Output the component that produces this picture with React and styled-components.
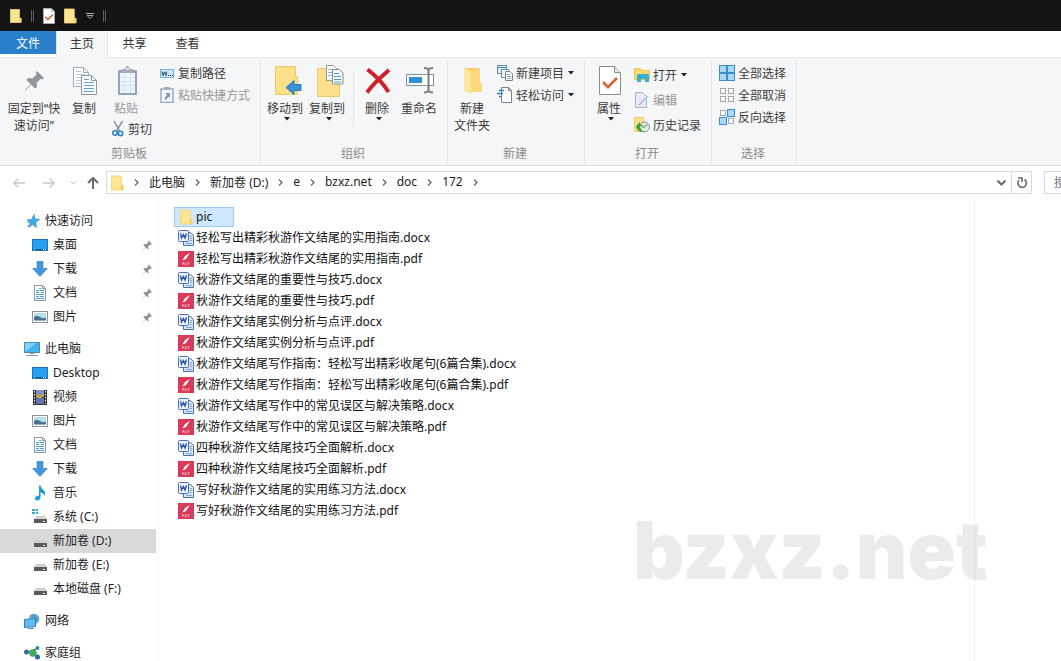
import React from 'react'
import styled, { createGlobalStyle, css } from 'styled-components'

const GlobalStyle = createGlobalStyle`
    * {
        box-sizing: border-box;
    }
    body {
        margin: 0;
        background: #fff;
    }
    body, button, input {
        font-family: "Noto Sans", "Noto Sans CJK SC", sans-serif;
        font-size: 12px;
    }
    button {
        padding: 0;
        border: 0;
        background: none;
        color: inherit;
    }
    svg {
        display: block;
        flex: none;
    }
`

/* ---------- icons ---------- */

const FolderIcon = ({ w = 14, h = 16 }) => (
    <svg width={w} height={h} viewBox="0 0 14 16">
        <path d="M.5.5h10.500v10h2v5H.5z" fill="#fde594" stroke="#f2d377" />
        <path d="M10.500 11l2.500-.5v5h-2.500z" fill="#f3cf66" />
    </svg>
)

const CheckPageIcon = ({ w = 12, h = 16 }) => (
    <svg width={w} height={h} viewBox="0 0 22 29">
        <path d="M.5.5h15l6 6v22H.5z" fill="#fff" stroke="#8c8c8c" />
        <path d="M15.500 .5v6h6" fill="#e6e6e6" stroke="#8c8c8c" />
        <path d="M4 16l5 5 9-9" fill="none" stroke="#d2693c" strokeWidth="2.800" />
    </svg>
)

const Caret = () => (
    <svg width="6" height="4" viewBox="0 0 6 4">
        <path d="M0 0h6L3 3.500z" fill="#222" />
    </svg>
)

const PinPath = ({ color }) => (
    <path d="M13 1l7 7-1.500 1.500-2-.5-4 4 .5 4-2 1.500-4-4L1.500 20.500 1 20l5.500-6-4-4L4 8l4.500.5 4-4L12 2.500z" fill={color} />
)

const BigPinIcon = () => (
    <svg width="22" height="22" viewBox="0 0 22 22"><PinPath color="#8f979d" /></svg>
)

const SmallPinIcon = () => (
    <svg width="11" height="11" viewBox="0 0 22 22"><PinPath color="#8b939a" /></svg>
)

const CopyIcon = () => (
    <svg width="24" height="28" viewBox="0 0 24 28">
        <path d="M.5.5h10l5 5v14H.5z" fill="#fff" stroke="#a3aab0" />
        <path d="M10.500 .5v5h5" fill="none" stroke="#a3aab0" />
        <path d="M3 4.500h5M3 7.500h9M3 10.500h5M3 13.500h5M3 16.500h5" stroke="#a9cbe6" />
        <path d="M8.500 8.500h10l5 5v14h-15z" fill="#fff" stroke="#90989e" />
        <path d="M18.500 8.500v5h5" fill="none" stroke="#90989e" />
        <path d="M11 12.500h5M11 15.500h10M11 18.500h10M11 21.500h10M11 24.500h10" stroke="#5ba3d6" />
    </svg>
)

const PasteIcon = () => (
    <svg width="21" height="30" viewBox="0 0 21 30">
        <rect x="1" y="4" width="19" height="25" rx="1" fill="#94a3c0" />
        <rect x="3" y="7" width="15" height="20" fill="#f0f4fb" />
        <path d="M3 11.500h15M3 15.500h15M3 19.500h15M3 23.500h15M7.500 7v20M13.500 7v20" stroke="#d9e2f1" />
        <path d="M5 3h3.500q0-3 2-3t2 3H16v4H5z" fill="#a5adb6" />
        <rect x="9.500" y="2" width="2" height="2" fill="#f5f6f7" />
    </svg>
)

const CutIcon = () => (
    <svg width="12" height="16" viewBox="0 0 12 16">
        <path d="M2 0l5.500 10M10.500 0L4.500 10" stroke="#8a9299" strokeWidth="1.500" fill="none" />
        <circle cx="3" cy="12" r="2.200" stroke="#2b83bf" strokeWidth="1.600" fill="none" />
        <circle cx="8.500" cy="12.500" r="2.200" stroke="#2b83bf" strokeWidth="1.600" fill="none" />
    </svg>
)

const CopyPathIcon = () => (
    <svg width="14" height="9" viewBox="0 0 14 9">
        <rect x=".5" y=".5" width="13" height="8" fill="#cbe6fa" stroke="#78b4e0" />
        <path d="M2 2.500l1 4 1.500-3.500L6 6.500l.5-4" stroke="#24425c" fill="none" />
        <path d="M8 6.500h1M10 6.500h1M12 6.500h1" stroke="#24425c" />
    </svg>
)

const PasteShortcutIcon = () => (
    <svg width="14" height="16" viewBox="0 0 14 16">
        <path d="M1 2h12v13.500H1z" fill="#f4f7fc" stroke="#9baac6" strokeWidth="1.500" />
        <path d="M4 0h6v3H4z" fill="#a5afbd" />
        <path d="M5 6h5v5L8.500 9.500 6 13 4.500 11.500 7 8z" fill="#7f94bb" />
    </svg>
)

const MoveToIcon = () => (
    <svg width="27" height="30" viewBox="0 0 27 30">
        <path d="M.5.5h20v10h2v18H.5z" fill="#fde08a" stroke="#ecc866" />
        <path d="M11 21.500l8-7v4h7v6h-7v4z" fill="#3c92d4" stroke="#2a7bbd" />
    </svg>
)

const CopyToIcon = () => (
    <svg width="27" height="32" viewBox="0 0 27 32">
        <path d="M.5 3.500h20v10h2v18H.5z" fill="#fde08a" stroke="#ecc866" />
        <path d="M9.500.5h7l3 3v12h-10z" fill="#fff" stroke="#939ba1" />
        <path d="M11 4.500h5M11 7.500h5M11 10.500h5" stroke="#84b5dc" />
        <path d="M15.500 4.500h7l3.500 3.500v11H15.500z" fill="#fff" stroke="#848c93" />
        <path d="M17 8.500h5M17 11.500h7M17 14.500h7M17 17h7" stroke="#4c97cf" />
    </svg>
)

const DeleteIcon = () => (
    <svg width="26" height="26" viewBox="0 0 26 26">
        <path d="M2.500 1.500C9 6.500 18 15 23.500 24M24 2C17 8 8 16 2 24.500" stroke="#cf1f2b" strokeWidth="4" fill="none" />
    </svg>
)

const RenameIcon = () => (
    <svg width="29" height="27" viewBox="0 0 29 27">
        <rect x=".5" y="7.500" width="27" height="11" fill="#fff" stroke="#8b9299" />
        <rect x="3" y="10" width="13" height="6" fill="#2f8fdb" />
        <path d="M18 1q4 0 4.500 2Q23 1 27 1M18 25.500q4 0 4.500-2 .5 2 4.500 2M22.500 3v21" stroke="#767d83" strokeWidth="2" fill="none" />
    </svg>
)

const NewFolderIcon = () => (
    <svg width="20" height="28" viewBox="0 0 20 28">
        <path d="M1 1h16v15h2v9H8z" fill="#f5cd68" />
        <path d="M1 1l7 3v24l-7-4z" fill="#fde79f" />
        <path d="M8 4l9-3v15l2 1v8H8z" fill="#f9d87c" />
    </svg>
)

const NewItemIcon = () => (
    <svg width="16" height="16" viewBox="0 0 16 16">
        <rect x=".5" y=".5" width="9" height="8" fill="#d5eafa" stroke="#6b8ba6" />
        <path d="M1 2.500h8" stroke="#3c8fca" />
        <path d="M4.500 4.500h7v8h-7z" fill="#eef6fc" stroke="#7c8a96" />
        <path d="M8.500 6.500h4.500l2.500 2.500v6.500h-7z" fill="#fff" stroke="#7c848b" />
        <path d="M10 9.500h3M10 11.500h4M10 13.500h4" stroke="#8fa5b6" />
    </svg>
)

const EasyAccessIcon = () => (
    <svg width="16" height="16" viewBox="0 0 16 16">
        <path d="M4.500.5h7l3 3v12h-10z" fill="#fff" stroke="#7c848b" />
        <path d="M11.500.5v3h3" fill="none" stroke="#7c848b" />
        <path d="M2 3.500h5M0 6.500h6M2 9.500h2" stroke="#2b83bf" strokeWidth="1.500" />
    </svg>
)

const OpenIcon = () => (
    <svg width="16" height="16" viewBox="0 0 16 16">
        <path d="M.5 1.500h6l1 2h8v9H.5z" fill="#fbd874" stroke="#efc75b" />
        <path d="M3 8.500Q3 7 5 7h8q2 0 2 1.500V15h-4v-3H7v3H3z" fill="#35b0d4" />
    </svg>
)

const EditIcon = () => (
    <svg width="16" height="16" viewBox="0 0 16 16">
        <path d="M1.500.5h7l4 4v11h-11z" fill="#e6edf7" stroke="#9fb2cf" />
        <path d="M3 13L13 3l2 1.500-9.500 10z" fill="#b5c4dd" stroke="#fff" strokeWidth=".6" />
    </svg>
)

const HistoryIcon = () => (
    <svg width="16" height="16" viewBox="0 0 16 16">
        <path d="M.5.500h9v14h-9z" fill="#fde188" stroke="#efcd68" />
        <circle cx="10.500" cy="10" r="5" fill="#e3e9e5" stroke="#8a948d" />
        <path d="M10.500 10l2.500-2.500M8.500 10h2" stroke="#555" fill="none" />
        <path d="M2 9l4-4v2.500q3 0 3 2-1-.5-3-.5 0 3.500 4 6-7 .5-8-6z" fill="#39a03c" />
    </svg>
)

// four squares, "on" lists the filled ones
const SelectIcon = ({ on }) => (
    <svg width="16" height="16" viewBox="0 0 16 16">
        {[[0, 0], [1, 0], [0, 1], [1, 1]].map(([x, y], i) => {
            const active = on.includes(i)
            return (
                <rect
                    key={i}
                    x={x * 8 + (active ? 0.5 : 1.5)}
                    y={y * 8 + (active ? 0.5 : 1.5)}
                    width={active ? 7 : 5}
                    height={active ? 7 : 5}
                    fill={active ? '#a9d8f8' : '#fff'}
                    stroke={active ? '#3a8dcb' : '#a6a6a6'}
                />
            )
        })}
    </svg>
)

const ArrowIcon = ({ dir, color }) => (
    <svg width="14" height="14" viewBox="0 0 14 14">
        <path
            d={{
                left: 'M13 7H2M6.500 2.500L2 7l4.500 4.500',
                right: 'M1 7h11M7.500 2.500L12 7l-4.500 4.500',
                up: 'M7 13V2M2 7l5-5 5 5',
            }[dir]}
            fill="none"
            stroke={color}
            strokeWidth={dir === 'up' ? 2 : 1.4}
        />
    </svg>
)

const Chevron = () => (
    <svg width="5" height="7" viewBox="0 0 5 7">
        <path d="M1 .5l3 3-3 3" fill="none" stroke="#666" strokeWidth="1.300" />
    </svg>
)

const ChevronDown = ({ w, color, thick }) => (
    <svg width={w} height="6" viewBox="0 0 9 6">
        <path d="M.5.5l4 4 4-4" fill="none" stroke={color} strokeWidth={thick} />
    </svg>
)

const RefreshIcon = () => (
    <svg width="12" height="12" viewBox="0 0 12 12">
        <path d="M8.500 2.500A4.300 4.300 0 1 1 3 3.200" fill="none" stroke="#6a6a6a" strokeWidth="1.600" />
        <path d="M2 1h4v4" fill="none" stroke="#6a6a6a" strokeWidth="1.600" />
    </svg>
)

const StarIcon = () => (
    <svg width="16" height="16" viewBox="0 0 16 16">
        <path d="M10 1.500l1 4.500 4.500.5-4 3 1 5-4-3-4 3 1.500-4.500-2.500-3 4-.5z" fill="#45a9e2" stroke="#2f8fcd" strokeWidth=".7" />
        <path d="M3 6.500h3M3 9.500h3M3 12.500h2" stroke="#7fc0e8" />
    </svg>
)

const DesktopIcon = () => (
    <svg width="16" height="16" viewBox="0 0 16 16">
        <rect x=".5" y="2.500" width="15" height="11" fill="#27a0f2" stroke="#1578bd" />
        <path d="M1 12.500h14" stroke="#125c94" />
        <path d="M2 12.500h1M11 12.500h1M13 12.500h1" stroke="#fff" />
    </svg>
)

const DownloadIcon = () => (
    <svg width="16" height="16" viewBox="0 0 16 16">
        <path d="M5 .5h6v7h4.500L8 15.500.500 7.500H5z" fill="#4295db" stroke="#3683c5" strokeWidth=".6" />
    </svg>
)

const DocumentIcon = () => (
    <svg width="16" height="16" viewBox="0 0 16 16">
        <path d="M2.500.5h8l3 3v12h-11z" fill="#fff" stroke="#8f9498" />
        <path d="M10.500.5v3h3" fill="none" stroke="#8f9498" />
        <path d="M7 3.500h2M4 5.500h3M8 5.500h4M4 7.500h3M9 7.500h3M4 9.500h8M4 11.500h3M8 11.500h4M4 13.500h8" stroke="#4aa0c9" />
    </svg>
)

const PictureIcon = () => (
    <svg width="16" height="16" viewBox="0 0 16 16">
        <rect x=".5" y="2.500" width="15" height="11" fill="#fff" stroke="#8f9498" />
        <rect x="2" y="4" width="12" height="8" fill="#b9dff2" />
        <path d="M2 8q3-2 6 0t6 .5V12H2z" fill="#46708c" />
        <path d="M2 11h12v1H2z" fill="#8bb7cf" />
    </svg>
)

const ComputerIcon = () => (
    <svg width="16" height="16" viewBox="0 0 16 16">
        <rect x=".5" y="1.500" width="15" height="10" fill="#45b3ee" stroke="#4a8fb8" />
        <path d="M1 11L12 2H1z" fill="#83cff6" />
        <path d="M6 12.500h4M2 14.500h12" stroke="#7f99a8" />
    </svg>
)

const VideoIcon = () => (
    <svg width="16" height="16" viewBox="0 0 16 16">
        <rect x="1" y="1" width="14" height="15" fill="#333" />
        <rect x="4" y="1" width="8" height="7" fill="#7f92c8" />
        <rect x="4" y="9" width="8" height="6" fill="#6373a8" />
        <path d="M4 5l4 2 4-3v3l-3 2H5z" fill="#c8ab3c" />
        <path d="M2.500 2v13M13.500 2v13" stroke="#eee" strokeDasharray="1.500 1.500" />
    </svg>
)

const MusicIcon = () => (
    <svg width="16" height="16" viewBox="0 0 16 16">
        <path d="M7 .5h1.500q.5 3 3 4.500 2.500 2 1 6-.5-3-4-3.500v5Q8 15.500 5 15.500q-2.500-.5-2-2.500.5-2 4-2.500z" fill="#1d9bdc" />
    </svg>
)

const DriveIcon = ({ system }) => (
    <svg width="16" height="16" viewBox="0 0 16 16">
        {system && <path d="M0 0h3v2H0zM4 0h2v2H4zM0 3h3v2H0zM4 3h2v2H4z" fill="#2aa9dc" />}
        <path d="M4 7h9l2 4H2z" fill="#cfd1d2" />
        <rect x="2" y="10" width="13" height="4" fill="#565c60" />
        <rect x="11" y="12" width="2" height="1" fill="#d9efe0" />
    </svg>
)

const NetworkIcon = () => (
    <svg width="16" height="16" viewBox="0 0 16 16">
        <circle cx="10" cy="6" r="5.500" fill="#8fc1e0" />
        <path d="M6 3q4-4 7 0 3 3 1 6-5-1-8-6z" fill="#5c9cc9" />
        <path d="M.5 6.500l11-1v8l-11 1z" fill="#5cbcf0" stroke="#2f7fb2" />
        <path d="M4 15.500h6" stroke="#4d87ab" fill="none" />
    </svg>
)

const HomeGroupIcon = () => (
    <svg width="16" height="16" viewBox="0 0 16 16">
        <path d="M3 7h6l4-4M9 8l4 4" stroke="#8db4c2" />
        <circle cx="2.500" cy="7" r="2.500" fill="#2d6d9f" />
        <circle cx="9" cy="8" r="3.800" fill="#43a85b" />
        <circle cx="13.500" cy="3" r="2" fill="#2f88a8" />
        <circle cx="13.500" cy="12" r="2.500" fill="#2567a8" />
    </svg>
)

const WordIcon = () => (
    <svg width="16" height="16" viewBox="0 0 16 16">
        <path d="M5.500 2.500h7l3 3v10h-10z" fill="#d6e4f8" stroke="#4a70b0" />
        <path d="M12 6.500h2M12 8.500h2M12 10.500h2M8 13.500h6" stroke="#7ea2da" />
        <rect x=".5" y=".5" width="10" height="11" rx="1" fill="#eef4fe" stroke="#4a70b0" />
        <path d="M2.500 3.500l1 4.500L5.500 4.500 7 8l1.500-4.500" fill="none" stroke="#2b569f" strokeWidth="1.400" />
    </svg>
)

const PdfIcon = () => (
    <svg width="16" height="16" viewBox="0 0 16 16">
        <rect width="16" height="16" fill="#d93a57" />
        <path d="M12 2L7 5 4.500 9.500 8 8z" fill="#fff" />
        <path d="M4.500 14v-2.500h1.300v1.300H4.500M7.200 11.500v2.500h.8q.8-1.200 0-2.500zM10.200 14v-2.500h1.500M10.200 12.700h1.200" stroke="#f7b3bf" strokeWidth=".7" fill="none" />
    </svg>
)

/* ---------- layout ---------- */

const Window = styled.div`
    height: 100vh;
    display: flex;
    flex-direction: column;
    overflow: hidden;
    position: relative;
    color: #1e1e1e;
`

const TitleBar = styled.header`
    height: 31px;
    flex: none;
    padding: 0 10px;
    display: flex;
    align-items: center;
    gap: 9px;
    background: #141414;
`

const TitleDivider = styled.span`
    width: 3px;
    height: 12px;
    border: 1px solid #5e5e5e;
    border-width: 0 1px;
`

const Tabs = styled.nav`
    height: 27px;
    flex: none;
    display: flex;
    border-bottom: 1px solid #e3e4e5;
`

const Tab = styled.button`
    width: 53px;
    height: 24px;
    color: #333;
    ${props => props.$file && css`
        width: 56px;
        height: 23px;
        background: #2a80cb;
        color: #fff;
    `}
    ${props => props.$active && css`
        width: 52px;
        height: 27px;
        padding-bottom: 3px;
        background: #f5f6f7;
        border: 1px solid #e3e4e5;
        border-width: 0 1px;
    `}
`

const Ribbon = styled.div`
    height: 108px;
    flex: none;
    padding: 3px 0 2px;
    display: flex;
    background: #f5f6f7;
    border-bottom: 1px solid #d9dadb;
    color: #3c3c3c;
`

const Group = styled.section`
    width: ${props => props.$width}px;
    display: flex;
    flex-direction: column;
    justify-content: space-between;
    border-right: 1px solid #e2e3e4;
`

const GroupBody = styled.div`
    padding-left: ${props => props.$pad || 0}px;
    display: flex;
    align-items: flex-start;
`

const GroupName = styled.div`
    padding-right: 2px;
    line-height: 18px;
    text-align: center;
    color: #8c8c8c;
`

const BigButton = styled.button`
    width: ${props => props.$width}px;
    display: flex;
    flex-direction: column;
    align-items: center;
    line-height: 17px;
    color: ${props => props.disabled ? '#979797' : 'inherit'};
`

const BigIcon = styled.span`
    height: 39px;
    padding-left: ${props => props.$shifted ? 6 : 2}px;
    display: flex;
    align-items: center;
`

const Column = styled.div`
    display: flex;
    flex-direction: column;
    align-items: flex-start;
    padding: ${props => props.$pad || '1px 0 0 1px'};
`

const SmallButton = styled.button`
    height: ${props => props.$height || 22}px;
    display: flex;
    align-items: center;
    gap: ${props => props.$gap || 3}px;
    white-space: nowrap;
    color: ${props => props.disabled ? '#979797' : 'inherit'};
`

const CaretSlot = styled.span`
    padding-left: 1px;
`

const BigCaretSlot = styled.span`
    padding-left: 4px;
`

const InnerDivider = styled.span`
    width: 1px;
    height: 56px;
    margin: 10px 2px 0 5px;
    background: #e2e3e4;
`

const AddressRow = styled.div`
    height: 33px;
    flex: none;
    display: flex;
    align-items: center;
`

const NavButtons = styled.div`
    width: 106px;
    padding-left: 12px;
    display: grid;
    grid-template-columns: 30px 28px 16px 14px;
    align-items: center;
`

const AddressBar = styled.div`
    flex: 1;
    height: 23px;
    padding-left: 4px;
    display: flex;
    align-items: center;
    border: 1px solid #d9d9d9;
`

const Crumbs = styled.div`
    flex: 1;
    display: flex;
    align-items: center;
    gap: 10px;
`

const Crumb = styled.button`
    padding-bottom: 2px;
`

const AddressButton = styled.button`
    width: 20px;
    height: 21px;
    display: flex;
    align-items: center;
    justify-content: center;
    border-left: ${props => props.$divided ? '1px solid #d9d9d9' : '0'};
`

const SearchSlot = styled.div`
    flex: 0 0 17px;
    margin-left: 12px;
    overflow: hidden;
`

const SearchInput = styled.input`
    display: block;
    width: 200px;
    height: 23px;
    padding: 0 0 0 9px;
    border: 1px solid #d9d9d9;
    &::placeholder {
        color: #6d6d6d;
        opacity: 1;
    }
`

const Body = styled.div`
    flex: 1;
    min-height: 0;
    display: flex;
`

const Sidebar = styled.nav`
    width: 159px;
    flex: none;
    padding: 10px 2px 0 0;
    border-right: 1px solid #f3f3f3;
`

const NavSection = styled.div`
    margin-bottom: 8px;
`

const NavItem = styled.a`
    height: 24px;
    padding: 0 3px 0 ${props => props.$top ? 24 : 32}px;
    display: flex;
    align-items: center;
    gap: 5px;
    color: inherit;
    text-decoration: none;
    background: ${props => props.$selected ? '#d9d9d9' : 'transparent'};
`

const ItemText = styled.span`
    flex: 1;
    padding-bottom: 2px;
`

const FileList = styled.main`
    flex: 1;
    padding: 8px 15px;
    display: flex;
    flex-direction: column;
    align-items: flex-start;
    gap: 1px;
`

const FileItem = styled.a`
    height: 20px;
    min-width: 60px;
    padding: 0 3px;
    display: flex;
    align-items: center;
    gap: 2px;
    white-space: nowrap;
    color: #111;
    text-decoration: none;
    border: 1px solid ${props => props.$selected ? '#99cbf3' : 'transparent'};
    background: ${props => props.$selected ? '#cde8ff' : 'transparent'};
`

const FileIcon = styled.span`
    width: 16px;
    display: flex;
    justify-content: center;
`

const PreviewPane = styled.aside`
    width: 87px;
    flex: none;
    border-left: 1px solid #f0f0f0;
`

const Watermark = styled.div`
    position: absolute;
    right: 73px;
    bottom: 71px;
    font-family: Inter, sans-serif;
    font-size: 80px;
    font-weight: 900;
    line-height: 80px;
    color: rgba(0, 0, 0, 0.08);
    pointer-events: none;
`

/* ---------- data ---------- */

const crumbs = ['此电脑', '新加卷 (D:)', 'e', 'bzxz.net', 'doc', '172']

const navSections = [
    [
        { text: '快速访问', icon: <StarIcon />, top: true },
        { text: '桌面', icon: <DesktopIcon />, pinned: true },
        { text: '下载', icon: <DownloadIcon />, pinned: true },
        { text: '文档', icon: <DocumentIcon />, pinned: true },
        { text: '图片', icon: <PictureIcon />, pinned: true },
    ],
    [
        { text: '此电脑', icon: <ComputerIcon />, top: true },
        { text: 'Desktop', icon: <DesktopIcon /> },
        { text: '视频', icon: <VideoIcon /> },
        { text: '图片', icon: <PictureIcon /> },
        { text: '文档', icon: <DocumentIcon /> },
        { text: '下载', icon: <DownloadIcon /> },
        { text: '音乐', icon: <MusicIcon /> },
        { text: '系统 (C:)', icon: <DriveIcon system /> },
        { text: '新加卷 (D:)', icon: <DriveIcon />, selected: true },
        { text: '新加卷 (E:)', icon: <DriveIcon /> },
        { text: '本地磁盘 (F:)', icon: <DriveIcon /> },
    ],
    [{ text: '网络', icon: <NetworkIcon />, top: true }],
    [{ text: '家庭组', icon: <HomeGroupIcon />, top: true }],
]

const documents = [
    '轻松写出精彩秋游作文结尾的实用指南',
    '秋游作文结尾的重要性与技巧',
    '秋游作文结尾实例分析与点评',
    '秋游作文结尾写作指南：轻松写出精彩收尾句(6篇合集)',
    '秋游作文结尾写作中的常见误区与解决策略',
    '四种秋游作文结尾技巧全面解析',
    '写好秋游作文结尾的实用练习方法',
]

const Big = ({ icon, width, lines, caret, disabled, shifted }) => (
    <BigButton $width={width} disabled={disabled}>
        <BigIcon $shifted={shifted}>{icon}</BigIcon>
        {lines.map(line => <span key={line}>{line}</span>)}
        {caret && <BigCaretSlot><Caret /></BigCaretSlot>}
    </BigButton>
)

const Small = ({ icon, text, caret, disabled, height, gap }) => (
    <SmallButton disabled={disabled} $height={height} $gap={gap}>
        {icon}
        <span>{text}</span>
        {caret && <CaretSlot><Caret /></CaretSlot>}
    </SmallButton>
)

const HomeRibbon = () => (
    <Ribbon>
        <Group $width={261}>
            <GroupBody $pad={4}>
                <Big width={60} icon={<BigPinIcon />} lines={['固定到“快', '速访问”']} />
                <Big width={40} icon={<CopyIcon />} lines={['复制']} />
                <Column $pad="0">
                    <Big width={44} icon={<PasteIcon />} lines={['粘贴']} disabled />
                    <Column $pad="2px 0 0 8px">
                        <Small icon={<CutIcon />} text="剪切" height={20} gap={4} />
                    </Column>
                </Column>
                <Column $pad="1px 0 0 8px">
                    <Small icon={<CopyPathIcon />} text="复制路径" gap={4} />
                    <Small icon={<PasteShortcutIcon />} text="粘贴快捷方式" gap={4} disabled />
                </Column>
            </GroupBody>
            <GroupName>剪贴板</GroupName>
        </Group>
        <Group $width={187}>
            <GroupBody $pad={3}>
                <Big width={42} icon={<MoveToIcon />} lines={['移动到']} caret shifted />
                <Big width={42} icon={<CopyToIcon />} lines={['复制到']} caret shifted />
                <InnerDivider />
                <Big width={42} icon={<DeleteIcon />} lines={['删除']} caret />
                <Big width={42} icon={<RenameIcon />} lines={['重命名']} />
            </GroupBody>
            <GroupName>组织</GroupName>
        </Group>
        <Group $width={137}>
            <GroupBody>
                <Big width={48} icon={<NewFolderIcon />} lines={['新建', '文件夹']} />
                <Column>
                    <Small icon={<NewItemIcon />} text="新建项目" caret />
                    <Small icon={<EasyAccessIcon />} text="轻松访问" caret />
                </Column>
            </GroupBody>
            <GroupName>新建</GroupName>
        </Group>
        <Group $width={127}>
            <GroupBody>
                <Big width={48} icon={<CheckPageIcon w={22} h={29} />} lines={['属性']} caret />
                <Column>
                    <Small icon={<OpenIcon />} text="打开" height={25} caret />
                    <Small icon={<EditIcon />} text="编辑" height={25} disabled />
                    <Small icon={<HistoryIcon />} text="历史记录" height={25} />
                </Column>
            </GroupBody>
            <GroupName>打开</GroupName>
        </Group>
        <Group $width={85}>
            <GroupBody $pad={6}>
                <Column>
                    <Small icon={<SelectIcon on={[0, 1, 2, 3]} />} text="全部选择" />
                    <Small icon={<SelectIcon on={[]} />} text="全部取消" />
                    <Small icon={<SelectIcon on={[1, 2]} />} text="反向选择" />
                </Column>
            </GroupBody>
            <GroupName>选择</GroupName>
        </Group>
    </Ribbon>
)

const App = () => {
    return (
        <Window>
            <GlobalStyle />
            <TitleBar>
                <FolderIcon w={12} h={16} />
                <TitleDivider />
                <CheckPageIcon />
                <FolderIcon w={13} h={16} />
                <svg width="8" height="6" viewBox="0 0 8 6">
                    <path d="M0 .5h8M1 2.500h6L4 5.500z" fill="none" stroke="#aaa" />
                </svg>
                <TitleDivider />
            </TitleBar>
            <Tabs>
                <Tab $file>文件</Tab>
                <Tab $active>主页</Tab>
                <Tab>共享</Tab>
                <Tab>查看</Tab>
            </Tabs>
            <HomeRibbon />
            <AddressRow>
                <NavButtons>
                    <ArrowIcon dir="left" color="#c9c9c9" />
                    <ArrowIcon dir="right" color="#c9c9c9" />
                    <ChevronDown w={6} color="#c0c0c0" thick={1.5} />
                    <ArrowIcon dir="up" color="#6a6a6a" />
                </NavButtons>
                <AddressBar>
                    <Crumbs>
                        <FolderIcon w={13} h={16} />
                        {crumbs.map(name => (
                            <React.Fragment key={name}>
                                <Chevron />
                                <Crumb>{name}</Crumb>
                            </React.Fragment>
                        ))}
                        <Chevron />
                    </Crumbs>
                    <AddressButton aria-label="展开">
                        <ChevronDown w={9} color="#6a6a6a" thick={2} />
                    </AddressButton>
                    <AddressButton $divided aria-label="刷新">
                        <RefreshIcon />
                    </AddressButton>
                </AddressBar>
                <SearchSlot>
                    <SearchInput type="search" aria-label="搜索" placeholder="搜索" />
                </SearchSlot>
            </AddressRow>
            <Body>
                <Sidebar>
                    {navSections.map((items, i) => (
                        <NavSection key={i}>
                            {items.map(item => (
                                <NavItem href="#" key={item.text} $top={item.top} $selected={item.selected}>
                                    {item.icon}
                                    <ItemText>{item.text}</ItemText>
                                    {item.pinned && <SmallPinIcon />}
                                </NavItem>
                            ))}
                        </NavSection>
                    ))}
                </Sidebar>
                <FileList>
                    <FileItem href="#" $selected>
                        <FileIcon><FolderIcon w={13} h={16} /></FileIcon>
                        <ItemText>pic</ItemText>
                    </FileItem>
                    {documents.map(name => (
                        <React.Fragment key={name}>
                            <FileItem href="#">
                                <FileIcon><WordIcon /></FileIcon>
                                <ItemText>{name}.docx</ItemText>
                            </FileItem>
                            <FileItem href="#">
                                <FileIcon><PdfIcon /></FileIcon>
                                <ItemText>{name}.pdf</ItemText>
                            </FileItem>
                        </React.Fragment>
                    ))}
                </FileList>
                <PreviewPane />
            </Body>
            <Watermark>bzxz.net</Watermark>
        </Window>
    )
}

export default App
